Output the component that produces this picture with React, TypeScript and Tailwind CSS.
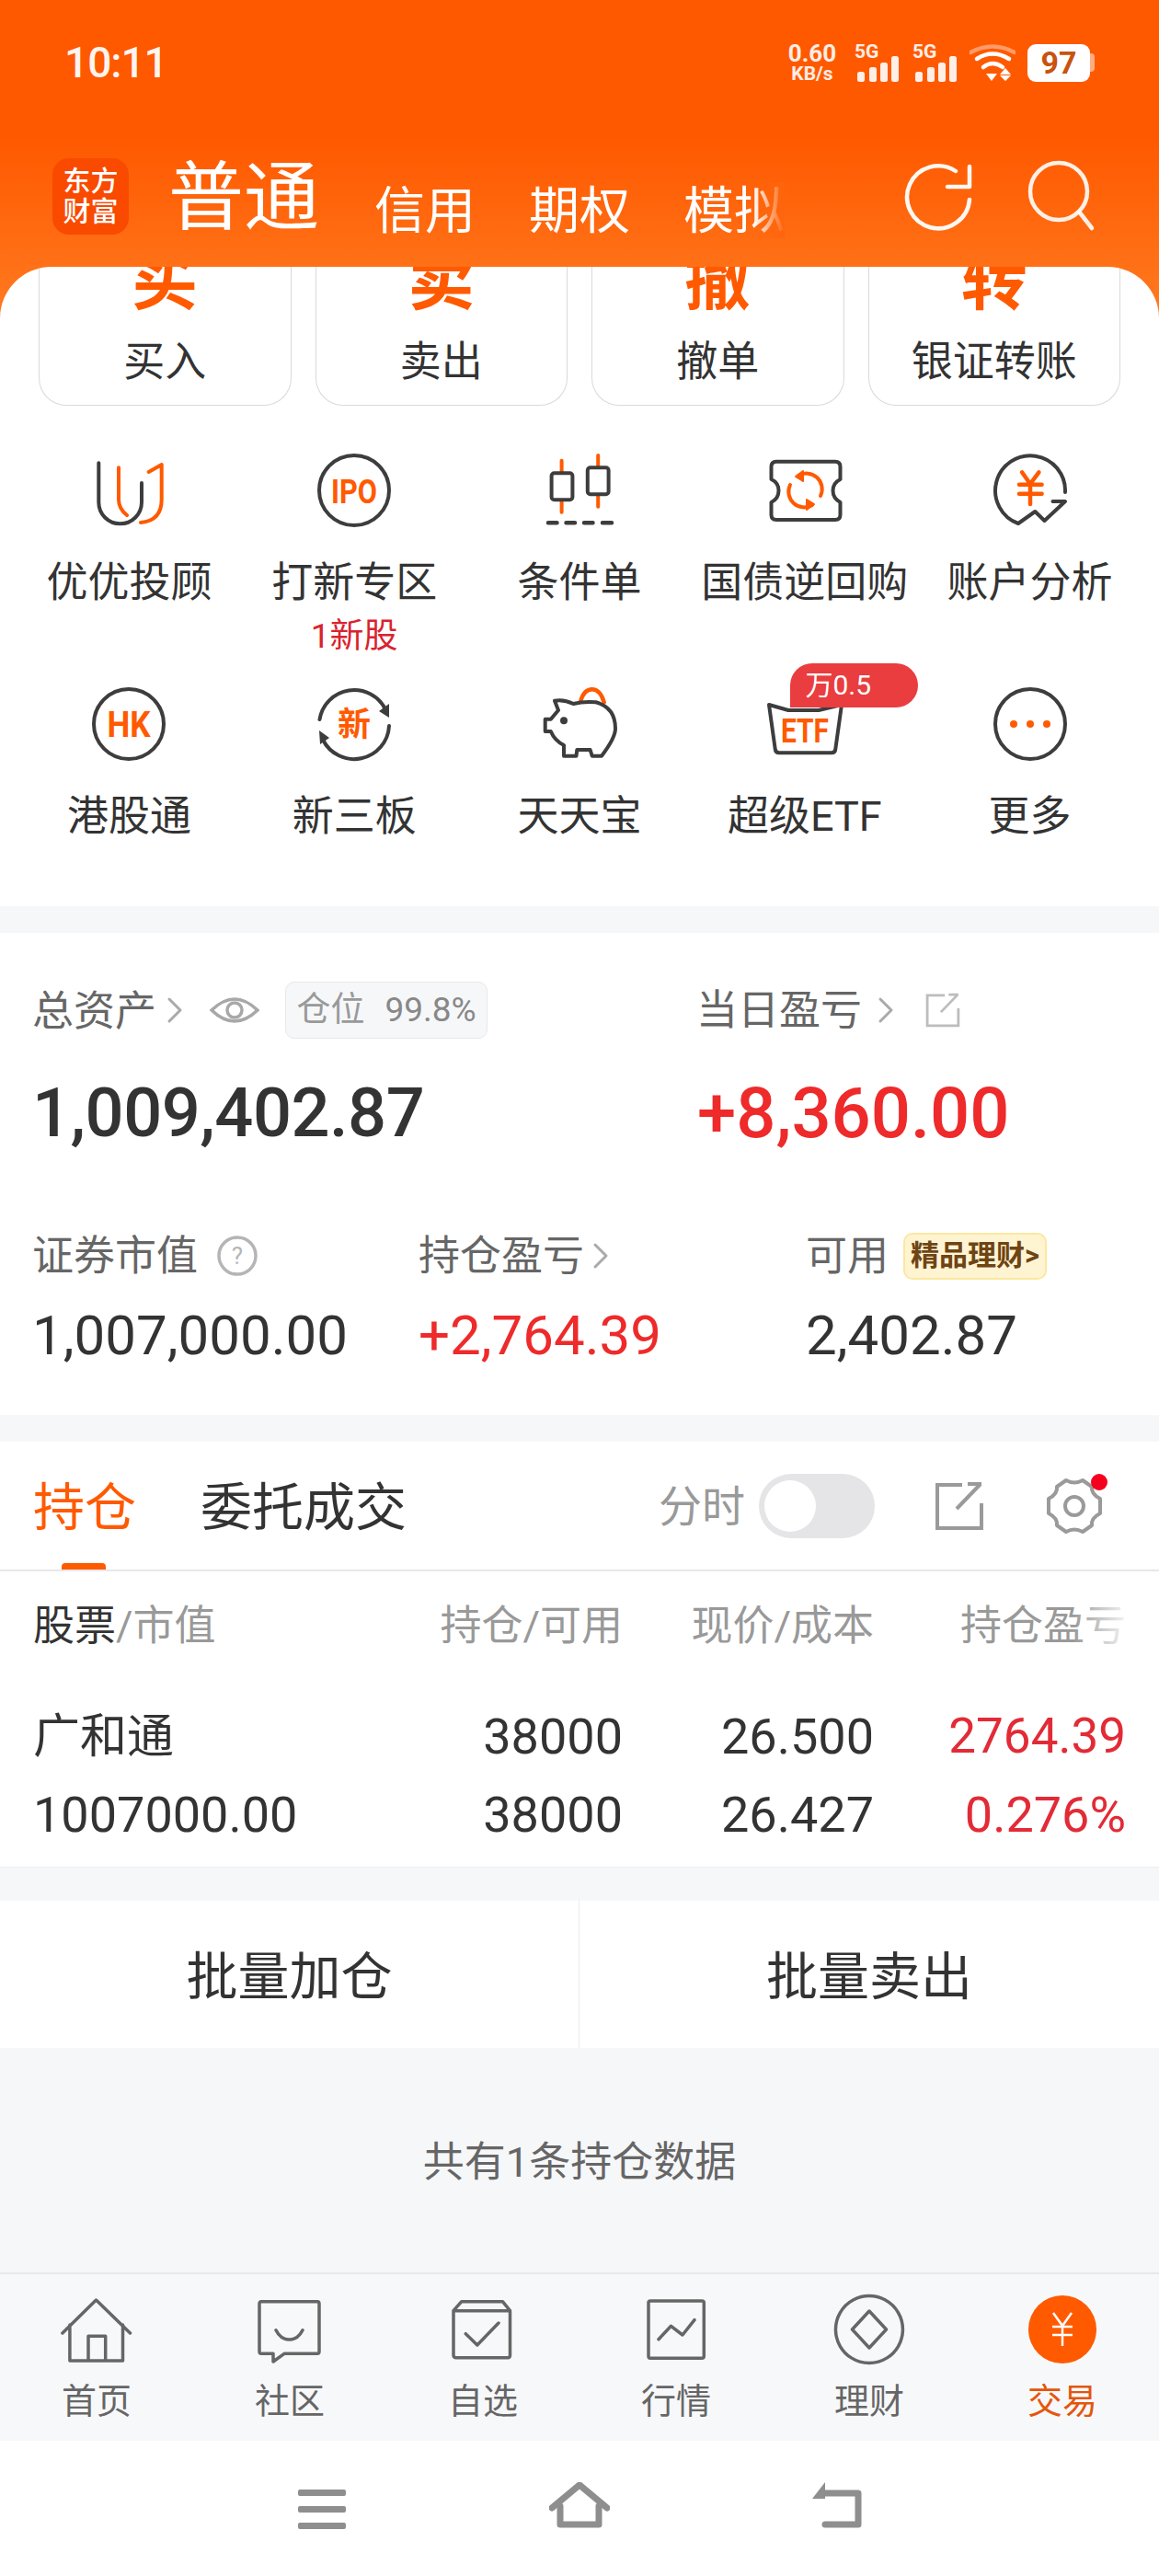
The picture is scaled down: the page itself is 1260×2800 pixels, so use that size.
import type { ReactNode } from "react";

const DARK = "#3d3d3d";
const ORANGE = "#ff5a00";

function Icon({ children }: { children: ReactNode }) {
  return (
    <svg width="90" height="90" viewBox="0 0 90 90" fill="none" strokeLinecap="round" strokeLinejoin="round">
      {children}
    </svg>
  );
}

function IconText({ y, size, width, children }: { y: number; size: number; width?: number; children: string }) {
  return (
    <text
      x="45"
      y={y}
      textAnchor="middle"
      fontSize={size}
      fontWeight="700"
      fill={ORANGE}
      fontFamily="Roboto, 'Noto Sans CJK SC', sans-serif"
      textLength={width}
      lengthAdjust={width ? "spacingAndGlyphs" : undefined}
    >
      {children}
    </text>
  );
}

const gridItems: { label: string; sub?: string; badge?: string; icon: ReactNode }[] = [
  {
    label: "优优投顾",
    icon: (
      <Icon>
        <path d="M12.3 15.3V58a23.3 23.3 0 0 0 46.7 0V37" stroke={DARK} strokeWidth="4" />
        <path d="M34 20.3V55q0 10 9 17" stroke={ORANGE} strokeWidth="4" />
        <path d="M66.7 25l14-8V55q0 23-22.7 25" stroke={ORANGE} strokeWidth="4" />
      </Icon>
    ),
  },
  {
    label: "打新专区",
    sub: "1新股",
    icon: (
      <Icon>
        <circle cx="45" cy="45" r="38" stroke={DARK} strokeWidth="4" />
        <IconText y={58.5} size={37} width={50}>IPO</IconText>
      </Icon>
    ),
  },
  {
    label: "条件单",
    icon: (
      <Icon>
        <path d="M25.6 12.7V26M25.6 56V68.7M65.2 7V20M65.2 50V62.7" stroke={ORANGE} strokeWidth="4" />
        <rect x="14.6" y="26.3" width="22.8" height="29" rx="3" stroke={DARK} strokeWidth="4" />
        <rect x="53.8" y="20.3" width="22.8" height="29" rx="3" stroke={DARK} strokeWidth="4" />
        <path d="M11 80.3h9.5M30.5 80.3h9.5M50 80.3h9.5M70 80.3h10" stroke={DARK} strokeWidth="4.5" />
      </Icon>
    ),
  },
  {
    label: "国债逆回购",
    icon: (
      <Icon>
        <path
          d="M14 13.7H78q5.5 0 5.5 5.5V33q-8 4-8 12.3t8 12.7V71.5q0 5.5-5.5 5.5H14q-5.5 0-5.5-5.5V58q8-4 8-12.7t-8-12.3V19.2q0-5.5 5.5-5.5Z"
          stroke={DARK}
          strokeWidth="4"
        />
        <path d="M38 29a17 17 0 0 1 24 22" stroke={ORANGE} strokeWidth="4" />
        <path d="M53 61a17 17 0 0 1-24-22" stroke={ORANGE} strokeWidth="4" />
        <path d="M43 24l-8 6 8 5ZM47 66l8-6-8-5Z" fill={ORANGE} stroke={ORANGE} strokeWidth="2" />
      </Icon>
    ),
  },
  {
    label: "账户分析",
    icon: (
      <Icon>
        <path d="M83 47A38 38 0 1 0 32 81L50.3 68L60.5 78L83 57H69.5" stroke={DARK} strokeWidth="4" />
        <path d="M36 25.3L45 38L54.4 25.3M33 38.7H57.6M33 48.7H57.6M45 38V60" stroke={ORANGE} strokeWidth="4.5" />
      </Icon>
    ),
  },
  {
    label: "港股通",
    icon: (
      <Icon>
        <circle cx="45" cy="45" r="38" stroke={DARK} strokeWidth="4" />
        <IconText y={58.5} size={38} width={47}>HK</IconText>
      </Icon>
    ),
  },
  {
    label: "新三板",
    icon: (
      <Icon>
        <path d="M7.5 40A38 38 0 0 1 79 29" stroke={DARK} strokeWidth="4" />
        <path d="M83 47A38 38 0 0 1 11 62" stroke={DARK} strokeWidth="4" />
        <path d="M83 23L83 38L72 31ZM7 52L8 67L18 60Z" fill={DARK} />
        <IconText y={58} size={36}>新</IconText>
      </Icon>
    ),
  },
  {
    label: "天天宝",
    icon: (
      <Icon>
        <path d="M46.4 19.7Q50 7.3 58.7 7.3T71.7 21.3" stroke={ORANGE} strokeWidth="4.5" />
        <path
          d="M18 19.7Q28 18 38.3 23Q50 20 62.8 21.3Q84 27 84 50Q84 60 69 79.7H58.7L56.6 73H42.3L41.5 79.7H28V68Q18 63 13.8 53H7.7V39.7H13.8L22 30Z"
          stroke={DARK}
          strokeWidth="4"
        />
        <circle cx="28" cy="41.3" r="4" fill={DARK} />
      </Icon>
    ),
  },
  {
    label: "超级ETF",
    badge: "万0.5",
    icon: (
      <Icon>
        <path d="M6 24L27 30H60L85 24L78.3 72Q78 76.3 74 76.3H17Q13 76.3 12.7 72Z" stroke={DARK} strokeWidth="4" />
        <IconText y={65} size={37} width={52}>ETF</IconText>
      </Icon>
    ),
  },
  {
    label: "更多",
    icon: (
      <Icon>
        <circle cx="45" cy="45" r="38" stroke={DARK} strokeWidth="4" />
        <circle cx="27" cy="45" r="4" fill={ORANGE} />
        <circle cx="45" cy="45" r="4" fill={ORANGE} />
        <circle cx="63" cy="45" r="4" fill={ORANGE} />
      </Icon>
    ),
  },
];

const tabItems: { label: string; icon: ReactNode; active?: boolean }[] = [
  {
    label: "首页",
    icon: <path d="M2.9 44L39.5 8L76.5 44M10.9 35V74H68.5V35M31 74V47.3H49.7V74" />,
  },
  {
    label: "社区",
    icon: <path d="M9 9.7H70Q72 9.7 72 12V64Q72 66.3 70 66.3H34L22 75V66.3H9Q7 66.3 7 64V12Q7 9.7 9 9.7ZM25 40.7Q30 51 39.5 51T54 40.7" />,
  },
  {
    label: "自选",
    icon: <path d="M16.8 9.7H61.4L69.5 19.7V68Q69.5 70.7 67 70.7H11Q8 70.7 8 68V19.7ZM8 19.7H69.5M21.3 44.7L33.8 57L57 33" />,
  },
  {
    label: "行情",
    icon: <path d="M12 9H68Q70.3 9 70.3 11V69Q70.3 71.3 68 71.3H12Q10 71.3 10 69V11Q10 9 12 9ZM21 50.7L34.5 36.3L47 46L60 29.7" />,
  },
  {
    label: "理财",
    icon: <path d="M40 3.5A36.5 36.5 0 1 1 39.9 3.5ZM40 20L58.5 40L40 60L21.5 40Z" />,
  },
  {
    label: "交易",
    active: true,
    icon: null,
  },
];

function Bars() {
  return (
    <svg width="46" height="28" viewBox="0 0 46 28" fill="#fff" fillOpacity="0.9">
      <rect x="0" y="17" width="8" height="11" rx="2.5" />
      <rect x="13" y="12" width="8" height="16" rx="2.5" />
      <rect x="25" y="7" width="8" height="21" rx="2.5" />
      <rect x="37" y="0" width="8" height="28" rx="2.5" />
    </svg>
  );
}

function Signal() {
  return (
    <div className="flex flex-col items-start w-[48px] h-[41px]">
      <span className="text-[21px] leading-[16px] font-bold text-white/90">5G</span>
      <div className="-mt-[3px] ml-[3px]">
        <Bars />
      </div>
    </div>
  );
}

function StatusBar() {
  return (
    <div className="h-[136px] pl-[70px] pr-[70px] flex items-center justify-between">
      <span className="text-[46px] leading-none font-medium text-white/95 tracking-[-1px]">10:11</span>
      <div className="flex items-center">
        <div className="w-[54px] flex flex-col items-center text-white/90 font-bold">
          <span className="text-[26px] leading-[24px]">0.60</span>
          <span className="text-[21px] leading-[21px]">KB/s</span>
        </div>
        <div className="ml-[19px]">
          <Signal />
        </div>
        <div className="ml-[15px]">
          <Signal />
        </div>
        <svg className="ml-[14px]" width="50" height="40" viewBox="0 0 50 40" fill="none" strokeLinecap="round">
          <path d="M1 9Q25 -4 49 9" stroke="#fff" strokeOpacity="0.4" strokeWidth="4.5" />
          <path d="M8 16Q25 5 43 16" stroke="#fff" strokeWidth="4.5" />
          <path d="M15 25Q25 17 36 25" stroke="#fff" strokeWidth="4.5" />
          <path d="M18 32H30L24 40Z M39 26L45 33H33Z M33 34H45L39 40Z" fill="#fff" />
        </svg>
        <div className="ml-[13px] flex items-center">
          <div className="w-[68px] h-[41px] rounded-[9px] bg-white flex items-center justify-center text-[34px] font-bold text-[#c8530f] leading-none">
            97
          </div>
          <div className="w-[5px] h-[20px] rounded-r-[4px] bg-white/50" />
        </div>
      </div>
    </div>
  );
}

function NavBar() {
  return (
    <div className="h-[154px] pl-[57px] flex items-center">
      <div className="w-[83px] h-[83px] rounded-[18px] bg-[#f94a00] flex flex-col items-center justify-center text-white text-[30px] leading-[33px] font-medium">
        <span>东方</span>
        <span>财富</span>
      </div>
      <span className="ml-[43px] mt-[4px] text-[82px] leading-[84px] text-white">普通</span>
      <span className="ml-[60px] mt-[32px] text-[55px] leading-[60px] text-white">信用</span>
      <span className="ml-[58px] mt-[32px] text-[55px] leading-[60px] text-white">期权</span>
      <span className="relative ml-[58px] mt-[32px] text-[55px] leading-[60px] text-white">
        模拟
        <span className="absolute right-0 top-0 w-[34px] h-full bg-linear-to-r from-[#ff650c00] to-[#ff650c]" />
      </span>
      <svg className="ml-[128px]" width="80" height="80" viewBox="0 0 80 80" fill="none" stroke="#fff" strokeOpacity="0.95" strokeWidth="4.5" strokeLinecap="round" strokeLinejoin="round">
        <path d="M58 13A34 34 0 1 0 73 44" />
        <path d="M73 8V30H49" />
      </svg>
      <svg className="ml-[51px]" width="80" height="80" viewBox="0 0 80 80" fill="none" stroke="#fff" strokeOpacity="0.9" strokeWidth="4.5" strokeLinecap="round">
        <circle cx="39" cy="35" r="31" />
        <path d="M61 57L75 75" />
      </svg>
    </div>
  );
}

function ActionCard({ glyph, label }: { glyph: string; label: string }) {
  return (
    <div className="h-[151px] border border-t-0 border-[#d9d9d9] rounded-b-[30px] flex flex-col items-center overflow-hidden">
      <div className="-mt-[20px] text-[72px] leading-[72px] font-bold text-[#ff5a00]">{glyph}</div>
      <div className="mt-[27px] text-[45px] leading-[50px] text-[#333]">{label}</div>
    </div>
  );
}

function ChevronR({ color = "#aaa" }: { color?: string }) {
  return (
    <svg width="20" height="30" viewBox="0 0 20 30" fill="none" stroke={color} strokeWidth="3" strokeLinecap="round" strokeLinejoin="round">
      <path d="M4 3L16 15L4 27" />
    </svg>
  );
}

function ShareIcon({ size, color }: { size: number; color: string }) {
  return (
    <svg width={size} height={size} viewBox="0 0 54 54" fill="none" stroke={color} strokeWidth="4">
      <path d="M30 4H3V51H51V24" />
      <path d="M24 30L50 3M36 3H51V3" />
    </svg>
  );
}

function AssetSection() {
  return (
    <section className="mt-[29px] h-[524px] bg-white pl-[35px] pr-[38px]">
      <div className="flex pt-[53px]">
        <div className="w-[722px]">
          <div className="h-[62px] flex items-center text-[45px] text-[#666]">
            <span className="mt-[3px]">总资产</span>
            <span className="ml-[10px] flex">
              <ChevronR />
            </span>
            <svg className="ml-[28px]" width="54" height="54" viewBox="0 0 54 54" fill="none" stroke="#a8a8a8" strokeWidth="3.5">
              <path d="M2 27Q27 3 52 27Q27 51 2 27Z" />
              <circle cx="27" cy="27" r="8" />
            </svg>
            <div className="ml-[28px] w-[220px] h-[62px] rounded-[10px] bg-[#f6f7f9] border border-[#e8e8e8] flex items-center justify-center gap-[22px] text-[37px] text-[#999]">
              <span>仓位</span>
              <span className="text-[#888]">99.8%</span>
            </div>
          </div>
          <div className="mt-[41px] text-[74px] leading-[80px] font-medium text-[#333] tracking-[-0.5px]">1,009,402.87</div>
        </div>
        <div>
          <div className="h-[62px] flex items-center text-[45px] text-[#666]">
            <span className="mt-[2px]">当日盈亏</span>
            <span className="ml-[16px] flex">
              <ChevronR />
            </span>
            <span className="ml-[33px] flex">
              <ShareIcon size={38} color="#bdbdbd" />
            </span>
          </div>
          <div className="mt-[41px] ml-[1px] text-[76px] leading-[80px] font-medium text-[#ee2a2a]">+8,360.00</div>
        </div>
      </div>
      <div className="mt-[89px] grid grid-cols-[420px_421px_1fr]">
        <div>
          <div className="h-[52px] flex items-center text-[45px] text-[#666]">
            <span className="mt-[2px]">证券市值</span>
            <svg className="ml-[21px]" width="44" height="44" viewBox="0 0 44 44" fill="none">
              <circle cx="22" cy="22" r="20" stroke="#b5b5b5" strokeWidth="3.5" />
              <text x="22" y="31" textAnchor="middle" fontSize="26" fill="#b5b5b5" fontFamily="Roboto">?</text>
            </svg>
          </div>
          <div className="mt-[26px] text-[60px] leading-[70px] text-[#333]">1,007,000.00</div>
        </div>
        <div>
          <div className="h-[52px] flex items-center text-[45px] text-[#666]">
            <span className="mt-[2px]">持仓盈亏</span>
            <span className="ml-[8px] flex">
              <ChevronR />
            </span>
          </div>
          <div className="mt-[26px] text-[60px] leading-[70px] text-[#ee2a2a]">+2,764.39</div>
        </div>
        <div>
          <div className="h-[52px] flex items-center text-[45px] text-[#666]">
            <span className="mt-[2px]">可用</span>
            <div className="ml-[16px] w-[156px] h-[51px] rounded-[10px] bg-[#fff4d2] border-2 border-[#fbe8a0] flex items-center justify-center text-[31px] font-bold text-[#6e4414] whitespace-nowrap">
              精品理财&gt;
            </div>
          </div>
          <div className="mt-[26px] text-[60px] leading-[70px] text-[#333]">2,402.87</div>
        </div>
      </div>
    </section>
  );
}

function HoldingsSection() {
  return (
    <section className="mt-[29px] bg-white h-[463px] border-b border-[#eceef1]">
      <div className="relative h-[141px] border-b-2 border-[#e8e8e8] pl-[36px] flex items-center">
        <span className="mt-[5px] text-[56px] text-[#ff5a00]">持仓</span>
        <span className="mt-[5px] ml-[70px] text-[56px] text-[#333]">委托成交</span>
        <span className="mt-[3px] ml-[274px] text-[47px] text-[#999]">分时</span>
        <div className="ml-[15px] w-[126px] h-[70px] rounded-full bg-[#e5e5e7] pl-[6px] flex items-center">
          <div className="w-[56px] h-[56px] rounded-full bg-white" />
        </div>
        <span className="ml-[65px] flex">
          <ShareIcon size={54} color="#9a9a9a" />
        </span>
        <svg className="ml-[65px]" width="66" height="64" viewBox="0 0 66 64" fill="none" stroke="#9a9a9a" strokeWidth="4" strokeLinejoin="round">
          <path d="M24 4Q33 9 42 4L52 11Q51 19 61 24V40Q51 45 52 53L42 60Q33 55 24 60L14 53Q15 45 5 40V24Q15 19 14 11Z" />
          <circle cx="33" cy="32" r="10" />
        </svg>
        <span className="absolute left-[1186px] top-[35px] w-[18px] h-[18px] rounded-full bg-[#f5001d]" />
        <span className="absolute left-[67px] bottom-0 w-[48px] h-[7px] rounded-t-[4px] bg-[#ff5a00]" />
      </div>
      <div className="relative h-[114px] pt-[5px] pl-[36px] pr-[33px] grid grid-cols-[367px_274px_273px_274px] items-center text-[45px] text-[#999]">
        <div>
          <span className="text-[#333]">股票</span>/市值
        </div>
        <div className="text-right">持仓/可用</div>
        <div className="text-right">现价/成本</div>
        <div className="text-right">持仓盈亏</div>
        <span className="absolute right-[28px] top-0 w-[66px] h-full bg-linear-to-r from-[#ffffff00] to-white" />
      </div>
      <div className="mt-[23px] pl-[36px] pr-[33px] grid grid-cols-[367px_274px_273px_274px] text-[54px] leading-[85px] text-[#333]">
        <div className="text-[51px]">广和通</div>
        <div className="text-right">38000</div>
        <div className="text-right">26.500</div>
        <div className="text-right text-[53px] text-[#e22b36]">2764.39</div>
        <div>1007000.00</div>
        <div className="text-right">38000</div>
        <div className="text-right">26.427</div>
        <div className="text-right text-[#e22b36]">0.276%</div>
      </div>
    </section>
  );
}

function TabBar() {
  return (
    <div className="h-[183px] border-t-2 border-[#e8e9eb] bg-[#f7f8fa] grid grid-cols-6">
      {tabItems.map((t) => (
        <div key={t.label} className="flex flex-col items-center pt-[20px]">
          {t.active ? (
            <div className="w-[74px] h-[74px] my-[3px] rounded-full bg-[#ff5a00] flex items-center justify-center">
              <svg width="40" height="40" viewBox="0 0 40 40" fill="none" stroke="#fff" strokeWidth="2.5">
                <path d="M10 2L20 16L30 2M9 17H31M9 26H31M20 16V38" />
              </svg>
            </div>
          ) : (
            <svg width="80" height="80" viewBox="0 0 80 80" fill="none" stroke="#666" strokeWidth="3.5" strokeLinecap="round" strokeLinejoin="round">
              {t.icon}
            </svg>
          )}
          <span className={`mt-[17px] text-[38px] leading-[42px] ${t.active ? "text-[#e4560b]" : "text-[#666]"}`}>{t.label}</span>
        </div>
      ))}
    </div>
  );
}

function SystemNav() {
  return (
    <div className="flex-1 bg-white flex items-start pt-[45px] pl-[324px]">
      <div className="mt-[8px] w-[52px] h-[43px] flex flex-col justify-between">
        <div className="h-[7px] rounded-[2px] bg-[#8e8e8e]" />
        <div className="h-[7px] rounded-[2px] bg-[#8e8e8e]" />
        <div className="h-[7px] rounded-[2px] bg-[#8e8e8e]" />
      </div>
      <svg className="ml-[221px]" width="66" height="50" viewBox="0 0 66 50" fill="none" stroke="#8e8e8e" strokeWidth="7" strokeLinejoin="round" strokeLinecap="round">
        <path d="M3 28L33 3L63 28" />
        <path d="M12 26V46H54V26" />
      </svg>
      <svg className="ml-[220px]" width="56" height="50" viewBox="0 0 56 50" fill="none">
        <path d="M14 12H50V46H14" stroke="#8e8e8e" strokeWidth="7" strokeLinejoin="round" strokeLinecap="round" />
        <path d="M14 0V18H0Z" fill="#8e8e8e" />
      </svg>
    </div>
  );
}

export default function App() {
  return (
    <div className="w-[1260px] h-[2800px] flex flex-col bg-[#f6f7f9] font-['Roboto','Noto_Sans_CJK_SC',sans-serif] overflow-hidden">
      <div className="bg-[linear-gradient(#ff5900_0px,#ff5900_150px,#ff7a20_345px)]">
        <StatusBar />
        <NavBar />
        <div className="h-[695px] bg-white rounded-t-[56px] overflow-hidden">
          <div className="px-[42px] grid grid-cols-4 gap-[26px]">
            <ActionCard glyph="买" label="买入" />
            <ActionCard glyph="卖" label="卖出" />
            <ActionCard glyph="撤" label="撤单" />
            <ActionCard glyph="转" label="银证转账" />
          </div>
          <div className="mt-[47px] px-[18px] grid grid-cols-5">
            {gridItems.map((item) => (
              <div key={item.label} className="relative h-[254px] flex flex-col items-center">
                {item.icon}
                <div className="mt-[31px] text-[45px] leading-[50px] text-[#333] whitespace-nowrap">{item.label}</div>
                {item.sub && <div className="mt-[13px] text-[37px] leading-[40px] text-[#d9232e]">{item.sub}</div>}
                {item.badge && (
                  <span className="absolute left-[107px] -top-[21px] w-[139px] h-[48px] pl-[16px] rounded-t-[24px] rounded-br-[24px] bg-[#e93d3f] text-white text-[30px] leading-[48px]">
                    {item.badge}
                  </span>
                )}
              </div>
            ))}
          </div>
        </div>
      </div>
      <AssetSection />
      <HoldingsSection />
      <div className="mt-[36px] h-[160px] bg-white grid grid-cols-2 text-[56px] text-[#333]">
        <div className="pt-[5px] flex items-center justify-center border-r border-[#ececec]">批量加仓</div>
        <div className="pt-[5px] flex items-center justify-center">批量卖出</div>
      </div>
      <div className="h-[244px] pt-[6px] flex items-center justify-center text-[45px] text-[#666]">共有1条持仓数据</div>
      <TabBar />
      <SystemNav />
    </div>
  );
}
